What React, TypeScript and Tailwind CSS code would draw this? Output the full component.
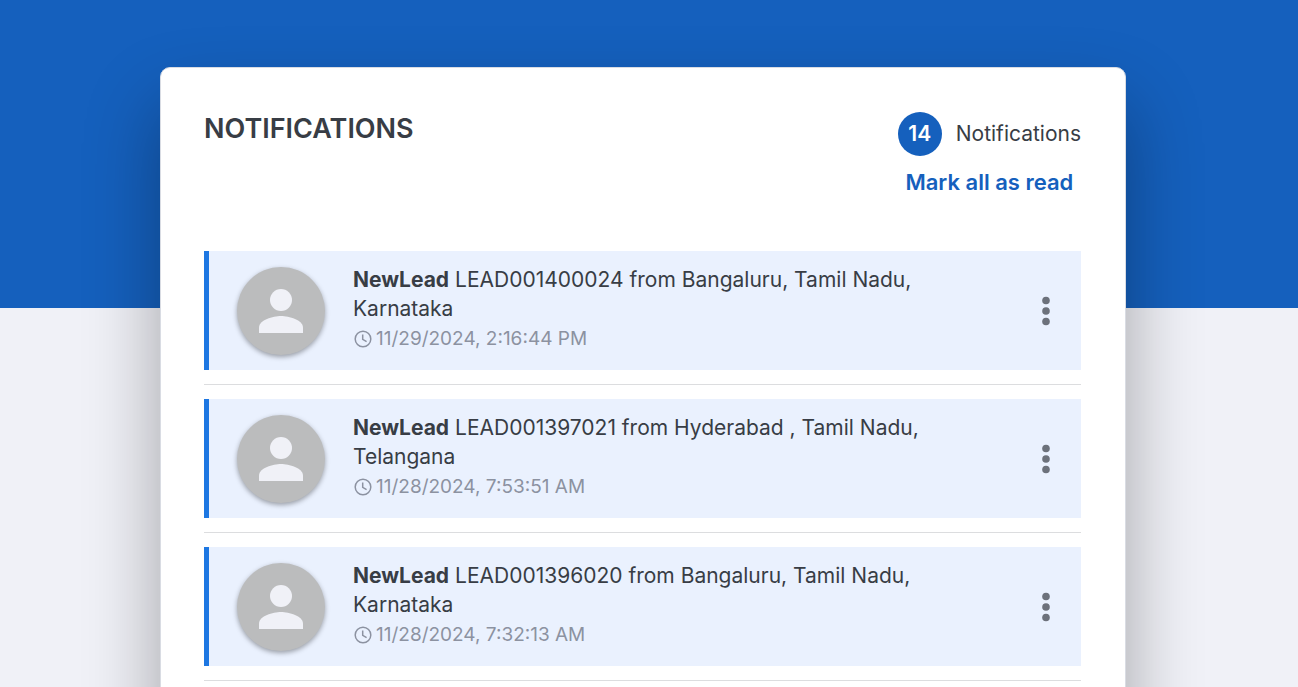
type Notification = {
  lead: string;
  place: string;
  time: string;
};

const notifications: Notification[] = [
  { lead: "LEAD001400024", place: "Bangaluru, Tamil Nadu, Karnataka", time: "11/29/2024, 2:16:44 PM" },
  { lead: "LEAD001397021", place: "Hyderabad , Tamil Nadu, Telangana", time: "11/28/2024, 7:53:51 AM" },
  { lead: "LEAD001396020", place: "Bangaluru, Tamil Nadu, Karnataka", time: "11/28/2024, 7:32:13 AM" },
];

function Avatar() {
  return (
    <span className="flex size-[88px] shrink-0 items-center justify-center rounded-full bg-[#bbbcbd] shadow-[0_2px_5px_rgba(0,0,0,0.35)]">
      <svg viewBox="0 0 44 44" className="size-11 fill-[#f0f1f7]" aria-hidden="true">
        <circle cx="22" cy="11" r="11" />
        <path d="M0 44V38.500C0 31 14 27 22 27S44 31 44 38.500V44Z" />
      </svg>
    </span>
  );
}

function ClockIcon() {
  return (
    <svg viewBox="0 0 18 18" className="size-[18px] shrink-0" fill="none" stroke="currentColor" aria-hidden="true">
      <circle cx="9" cy="9" r="7.800" strokeWidth="1.500" />
      <path d="M8.700 4.500V9.400L12.600 11.700" strokeWidth="1.500" />
    </svg>
  );
}

function NotificationItem({ lead, place, time }: Notification) {
  return (
    <li className="border-b border-[#dcdddf] pb-3.5">
      <article className="flex items-center border-l-5 border-[#1d77e2] bg-[#eaf1fe] py-3.5 pr-6 pl-7">
        <Avatar />
        <div className="ml-7 flex-1 pb-0.5">
          <p className="max-w-[600px] text-[21px] leading-[29px] text-[#383d45]">
            <b className="font-bold">NewLead</b> {lead} from {place}
          </p>
          <p className="flex items-center gap-1 pl-px text-[19px] leading-[31px] text-[#8c92a1]">
            <ClockIcon />
            <time>{time}</time>
          </p>
        </div>
        <button type="button" aria-label="More options" className="flex w-[23px] justify-center py-2">
          <svg viewBox="0 0 8 30" className="h-[30px] w-2 fill-[#6c717b]" aria-hidden="true">
            <circle cx="4" cy="4.500" r="3.800" />
            <circle cx="4" cy="15" r="3.800" />
            <circle cx="4" cy="25.500" r="3.800" />
          </svg>
        </button>
      </article>
    </li>
  );
}

export default function App() {
  return (
    <main className="h-screen overflow-hidden bg-[linear-gradient(#1560bd_308px,#f0f1f7_308px)] pt-[67px] pr-[172px] pl-40 font-[Inter,sans-serif]">
      <section className="rounded-[10px] border border-[#d9dce3] bg-white pt-11 pr-11 pb-16 pl-[43px] shadow-[0_38px_76px_rgba(0,0,0,0.33)]">
        <header className="flex h-[139px] items-start justify-between">
          <h1 className="text-[27px] leading-[34px] font-semibold text-[#383d45]">NOTIFICATIONS</h1>
          <div className="flex flex-col items-center">
            <p className="flex items-center gap-3.5 text-[21px] text-[#383d45]">
              <span className="flex size-11 items-center justify-center rounded-full bg-[#1560bd] font-semibold text-white">
                14
              </span>
              Notifications
            </p>
            <button type="button" className="mt-3 text-[22px] leading-7 font-semibold text-[#1560bd]">
              Mark all as read
            </button>
          </div>
        </header>
        <ul className="flex flex-col gap-3.5">
          {notifications.map((item) => (
            <NotificationItem key={item.lead} {...item} />
          ))}
        </ul>
      </section>
    </main>
  );
}
